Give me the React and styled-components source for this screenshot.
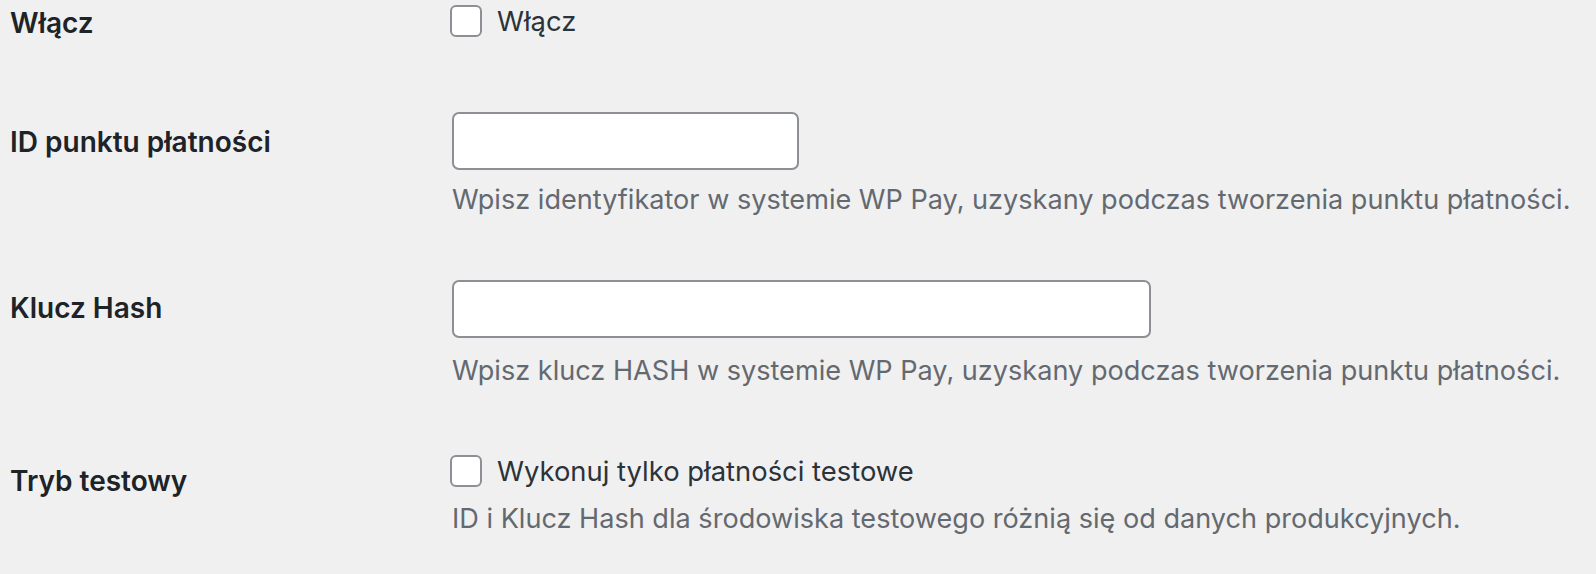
import React from "react";
import styled, { createGlobalStyle } from "styled-components";

const GlobalStyle = createGlobalStyle`
  html, body {
    margin: 0;
    padding: 0;
    background: #f0f0f1;
  }
  body {
    font-family: Inter, "Noto Sans", "Liberation Sans", sans-serif;
    color: #1d2327;
  }
`;

export default function App() {
  return (
    <>
      <GlobalStyle />
      <Form>
        <Row top={0}>
          <Label offset={5}>Włącz</Label>
          <Field>
            <CheckRow top={3}>
              <Checkbox type="checkbox" />
              <CheckText>Włącz</CheckText>
            </CheckRow>
          </Field>
        </Row>

        <Row top={71}>
          <Label offset={12}>ID punktu płatności</Label>
          <Field>
            <Input type="text" width={347} />
            <Description>
              Wpisz identyfikator w systemie WP Pay, uzyskany podczas tworzenia
              punktu płatności.
            </Description>
          </Field>
        </Row>

        <Row top={62}>
          <Label offset={10}>Klucz Hash</Label>
          <Field>
            <Input type="text" width={699} />
            <Description gap={15}>
              Wpisz klucz HASH w systemie WP Pay, uzyskany podczas tworzenia
              punktu płatności.
            </Description>
          </Field>
        </Row>

        <Row top={64}>
          <Label offset={10}>Tryb testowy</Label>
          <Field>
            <CheckRow top={0}>
              <Checkbox type="checkbox" />
              <CheckText>Wykonuj tylko płatności testowe</CheckText>
            </CheckRow>
            <Description gap={12}>
              ID i Klucz Hash dla środowiska testowego różnią się od danych
              produkcyjnych.
            </Description>
          </Field>
        </Row>
      </Form>
    </>
  );
}

const Form = styled.div`
  display: flex;
  flex-direction: column;
  width: 1596px;
`;

const Row = styled.div`
  display: grid;
  grid-template-columns: 440px 1fr;
  align-items: start;
  margin-top: ${(p) => p.top}px;
`;

const Label = styled.div`
  padding: ${(p) => p.offset}px 0 0 10px;
  font-size: 28px;
  line-height: 36px;
  font-weight: 600;
  color: #1d2327;
`;

const Field = styled.div`
  display: flex;
  flex-direction: column;
  align-items: flex-start;
  padding-left: 10px;
`;

const CheckRow = styled.label`
  display: flex;
  align-items: center;
  gap: 15px;
  margin-top: ${(p) => p.top}px;
  height: 36px;
`;

const Checkbox = styled.input`
  appearance: none;
  margin: 0;
  width: 32px;
  height: 32px;
  border: 2px solid #8c8f94;
  border-radius: 6px;
  background: #fff;
  box-sizing: border-box;
`;

const CheckText = styled.span`
  font-size: 27.4px;
  line-height: 36px;
  color: #2c3338;
`;

const Input = styled.input`
  box-sizing: border-box;
  margin: 0 0 0 2px;
  width: ${(p) => p.width}px;
  height: 58px;
  border: 2px solid #8c8f94;
  border-radius: 7px;
  background: #fff;
  outline: none;
`;

const Description = styled.p`
  margin: ${(p) => p.gap ?? 12}px 0 0 2px;
  font-size: 27.1px;
  line-height: 36px;
  color: #646970;
`;
